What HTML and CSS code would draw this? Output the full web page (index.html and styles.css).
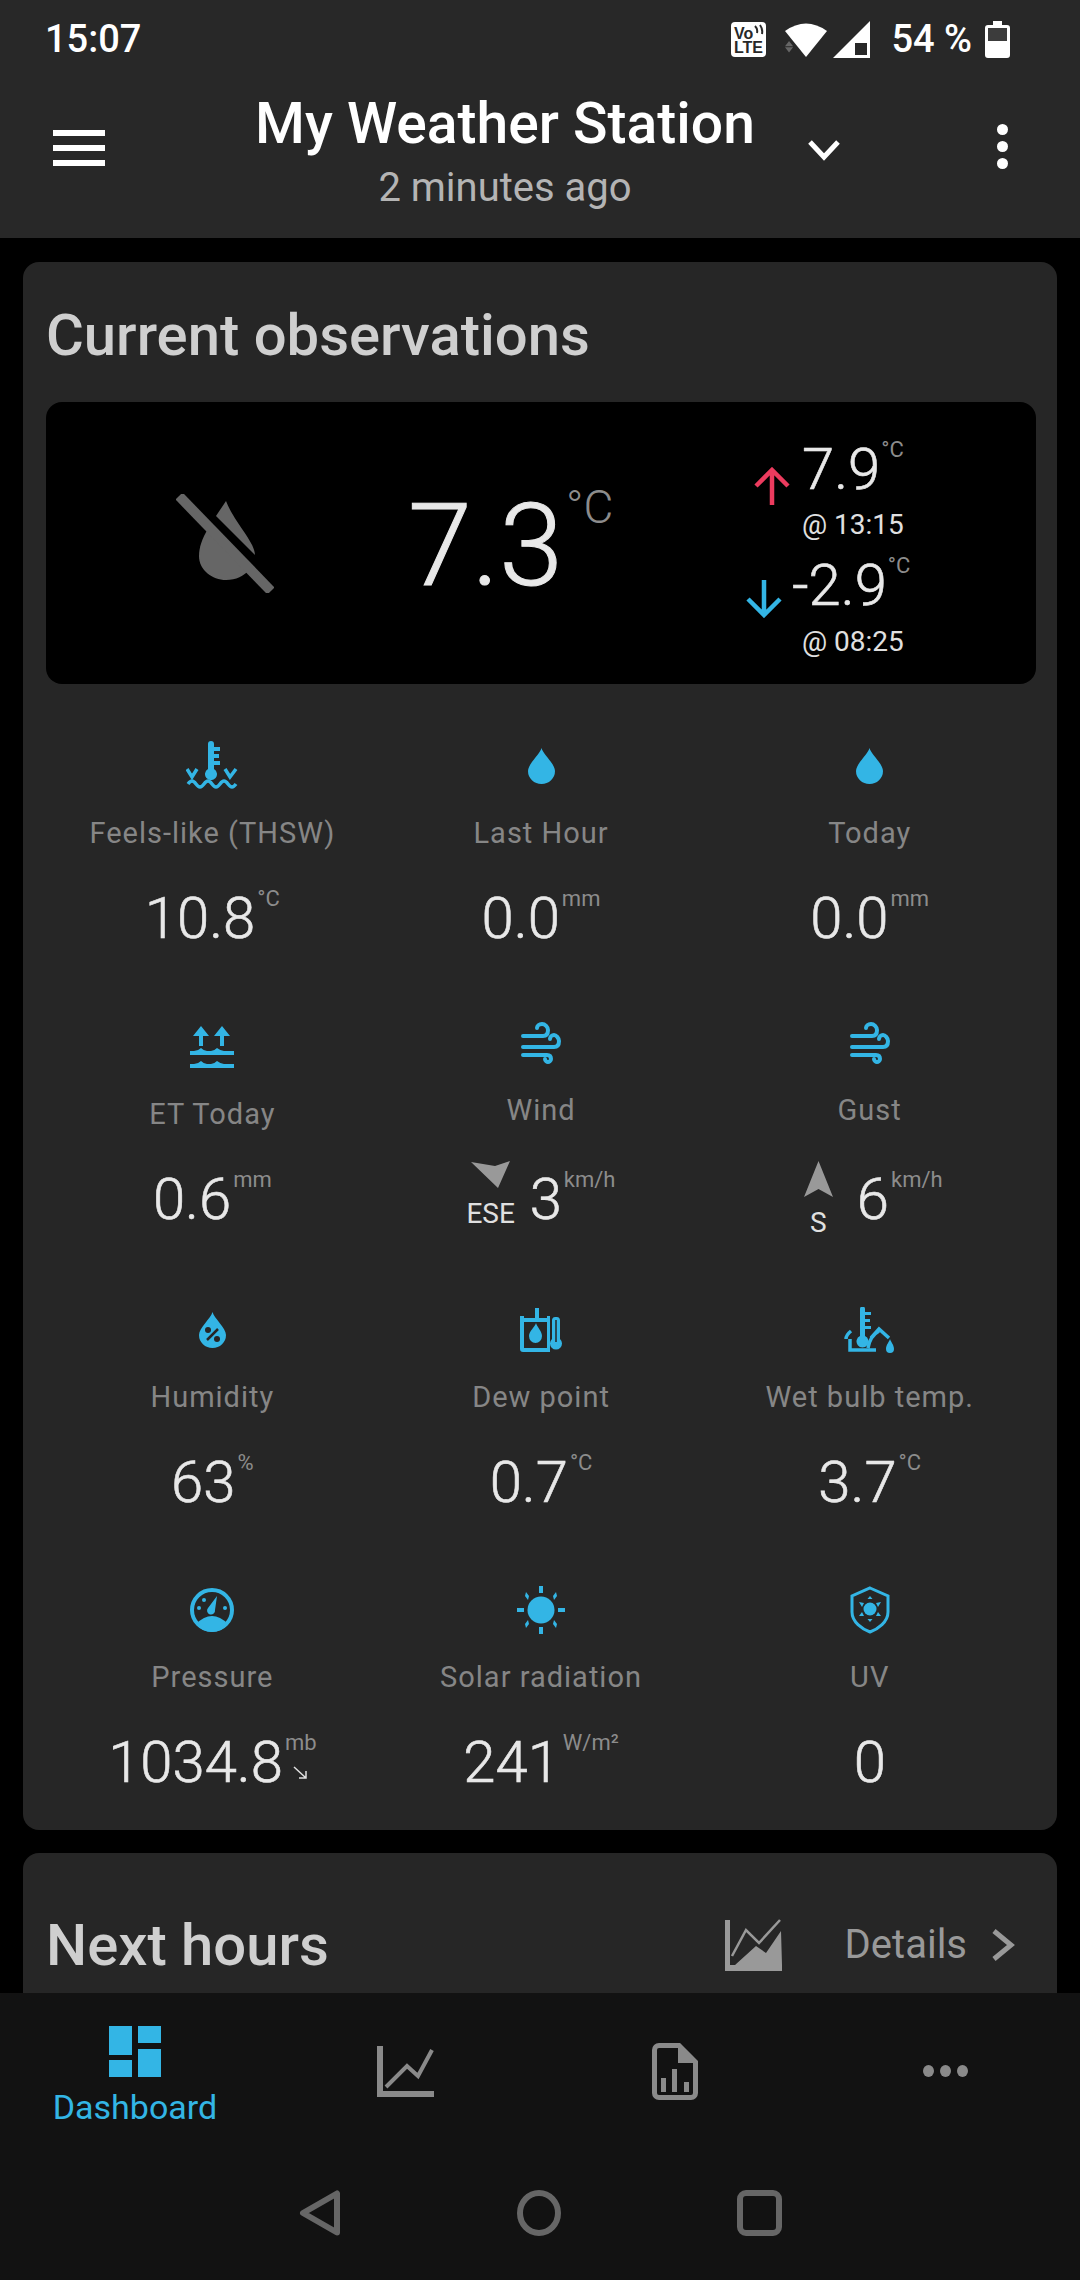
FILE: index.html
```html
<!DOCTYPE html>
<html lang="en">
<head>
<meta charset="utf-8">
<title>My Weather Station</title>
<link rel="stylesheet" href="styles.css">
</head>
<body>
<div class="app">
  <header class="top">
    <div class="status">
      <span class="clock">15:07</span>
      <div class="status-icons">
        <svg class="volte" width="35" height="35" viewBox="0 0 35 35"><rect width="35" height="35" rx="4" fill="#fff"/><text x="3" y="17" class="volte-t">Vo</text><path d="M24 4q3 3 2 7M29 3q3 4 2 9" stroke="#282828" stroke-width="2" fill="none"/><text x="3" y="31" class="volte-t">LTE</text></svg>
        <svg class="wifi" width="43" height="35" viewBox="0 0 43 35"><path d="M0 8Q21-7 42 8L21 34Z" fill="#fff"/><path d="M4.500 21l4.500 6H0zM4.500 34L0 28h9z" fill="#666" transform="translate(0 -1) scale(.9)"/></svg>
        <svg class="signal" width="38" height="37" viewBox="0 0 38 37"><path d="M0 37L37 0V37Z" fill="#fff"/><rect x="22" y="22" width="12" height="12" fill="#282828"/></svg>
        <span class="pct">54 %</span>
        <svg class="batt" width="25" height="37" viewBox="0 0 25 37"><path d="M8 0h9v4h5a3 3 0 0 1 3 3v27a3 3 0 0 1-3 3H3a3 3 0 0 1-3-3V7a3 3 0 0 1 3-3h5z" fill="#fff"/><rect x="3" y="7" width="19" height="13" fill="#3c3c3c"/></svg>
      </div>
    </div>
    <div class="toolbar">
      <div class="burger"><i></i><i></i><i></i></div>
      <div class="titles">
        <div class="title">My Weather Station</div>
        <div class="subtitle">2 minutes ago</div>
      </div>
      <svg class="chev" width="34" height="22" viewBox="0 0 34 22"><path d="M3 3l14 15L31 3" fill="none" stroke="#fff" stroke-width="5"/></svg>
      <div class="kebab"><i></i><i></i><i></i></div>
    </div>
  </header>

  <main class="scroll">
    <section class="card card-current">
      <h2 class="card-title">Current observations</h2>
      <div class="hero">
        <svg class="rain-off" width="98" height="99" viewBox="0 0 98 99"><path d="M40 22L50 7C58 28 79 48 79 61Z" fill="#666"/><path d="M32 35C26 44 23 54 23 62 23 76 36 86 50 86 60 86 68 82 73 76Z" fill="#666"/><path d="M3 2L95 97" stroke="#666" stroke-width="10"/></svg>
        <div class="hero-temp"><span class="hero-num">7.3</span><span class="hero-unit">°C</span></div>
        <div class="stats">
          <div class="stat stat-hi">
            <svg class="arrow" width="36" height="38" viewBox="0 0 36 38"><path d="M18 38V3M2 19L18 3l16 16" fill="none" stroke="#ec3b5e" stroke-width="4.500"/></svg>
            <div class="stat-num">7.9</div><div class="stat-unit">°C</div>
          </div>
          <div class="stat-time">@ 13:15</div>
          <div class="stat stat-lo">
            <svg class="arrow" width="36" height="38" viewBox="0 0 36 38"><path d="M18 0V35M2 19l16 16 16-16" fill="none" stroke="#33b5e5" stroke-width="4.500"/></svg>
            <div class="stat-num">-2.9</div><div class="stat-unit">°C</div>
          </div>
          <div class="stat-time">@ 08:25</div>
        </div>
      </div>

      <div class="metrics">
        <div class="metric">
          <div class="m-icon"><svg width="52" height="50" viewBox="0 0 52 50" class="ic"><path d="M25 0q3 0 3 3v25a6 6 0 1 1-6 0V3q0-3 3-3zM28 6h6v4h-6zM28 13h5v4h-5zM28 20h6v4h-6z" fill="#33b5e5"/><path d="M1 28l5 8 5-8M39 28l5 8 6-8M2 43c3-4 5-4 8 0s5 4 8 0 5-4 8 0 5 4 8 0 5-4 8 0 5 4 8 0" fill="none" stroke="#33b5e5" stroke-width="3.500"/></svg></div>
          <div class="m-label">Feels-like (THSW)</div>
          <div class="m-value"><span class="num">10.8</span><span class="unit">°C</span></div>
        </div>
        <div class="metric">
          <div class="m-icon"><svg width="27" height="36" viewBox="0 0 27 36" class="ic"><path d="M13.500 0C15 6 27 16 27 23A13.500 13 0 0 1 0 23C0 16 12 6 13.500 0Z"/></svg></div>
          <div class="m-label">Last Hour</div>
          <div class="m-value"><span class="num">0.0</span><span class="unit">mm</span></div>
        </div>
        <div class="metric">
          <div class="m-icon"><svg width="27" height="36" viewBox="0 0 27 36" class="ic"><path d="M13.500 0C15 6 27 16 27 23A13.500 13 0 0 1 0 23C0 16 12 6 13.500 0Z"/></svg></div>
          <div class="m-label">Today</div>
          <div class="m-value"><span class="num">0.0</span><span class="unit">mm</span></div>
        </div>

        <div class="metric">
          <div class="m-icon"><svg width="44" height="42" viewBox="0 0 44 42" class="ic"><path d="M11 0l8 10h-6v10H9V10H3zM32 0l8 10h-6v10h-4V10h-6z"/><path d="M0 25h4q4 0 7-3 3 3 6 3h4q3 0 6-3 4 3 7 3h10v4H0zM0 38h4q4 0 7-3 3 3 6 3h4q3 0 6-3 4 3 7 3h10v4H0z"/></svg></div>
          <div class="m-label">ET Today</div>
          <div class="m-value"><span class="num">0.6</span><span class="unit">mm</span></div>
        </div>
        <div class="metric metric-up">
          <div class="m-icon"><svg width="40" height="42" viewBox="0 0 40 42" class="stroke-ic"><path d="M2 14h20c4 0 5-3 5-6s-3-6-6-6-5 2-5 4M2 25h31c4 0 5-3 5-6s-3-6-5-6-4 2-4 4M2 33h24c3 0 4 2 4 4s-2 3-3 3-3-1-3-3"/></svg></div>
          <div class="m-label">Wind</div>
          <div class="m-value"><div class="dir"><svg width="40" height="27" viewBox="0 0 40 27"><path d="M0 1L24 5 39 0 27 27Z" fill="#999"/></svg><span class="dir-t">ESE</span></div><span class="num">3</span><span class="unit">km/h</span></div>
        </div>
        <div class="metric metric-up">
          <div class="m-icon"><svg width="40" height="42" viewBox="0 0 40 42" class="stroke-ic"><path d="M2 14h20c4 0 5-3 5-6s-3-6-6-6-5 2-5 4M2 25h31c4 0 5-3 5-6s-3-6-5-6-4 2-4 4M2 33h24c3 0 4 2 4 4s-2 3-3 3-3-1-3-3"/></svg></div>
          <div class="m-label">Gust</div>
          <div class="m-value"><div class="dir dir-s"><svg width="29" height="36" viewBox="0 0 29 36"><path d="M14.500 0L29 36 14.500 28 0 36Z" fill="#999"/></svg><span class="dir-t">S</span></div><span class="num">6</span><span class="unit">km/h</span></div>
        </div>

        <div class="metric">
          <div class="m-icon"><svg width="27" height="36" viewBox="0 0 27 36" class="ic"><path d="M13.500 0C15 6 27 16 27 23A13.500 13 0 0 1 0 23C0 16 12 6 13.500 0Z"/><path d="M8 28l11-11" stroke="#262626" stroke-width="2.500"/><circle cx="9" cy="18" r="3" fill="#262626"/><circle cx="18" cy="27" r="3" fill="#262626"/></svg></div>
          <div class="m-label">Humidity</div>
          <div class="m-value"><span class="num">63</span><span class="unit">%</span></div>
        </div>
        <div class="metric">
          <div class="m-icon"><svg width="43" height="44" viewBox="0 0 43 44" class="ic"><path d="M0 8h4v32h23v4H3q-3 0-3-3zM15 0h4v10h11V8h0v36h-3V14H4v-4h11zM36 9a3.500 3.500 0 0 1 4 3v19a6 6 0 1 1-8 0V12a3.500 3.500 0 0 1 4-3z"/><path d="M30 8h-3v36h3z"/><path d="M36 12v22" stroke="#262626" stroke-width="1.500"/><path d="M16 15c1 4 6 8 6 13a6.500 7 0 0 1-13 0c0-5 6-9 7-13z"/></svg></div>
          <div class="m-label">Dew point</div>
          <div class="m-value"><span class="num">0.7</span><span class="unit">°C</span></div>
        </div>
        <div class="metric">
          <div class="m-icon"><svg width="52" height="47" viewBox="0 0 52 47" class="ic"><path d="M16 2a2.500 2.500 0 0 1 5 0v27a6 6 0 1 1-5 0zM21 5h6v3h-6zM21 12h5v3h-5zM21 19h6v3h-6z"/><path d="M6 32v11h26M2 32q0-4 5-8M24 41q2-12 11-17M27 31l8-9 10 9" fill="none" stroke="#33b5e5" stroke-width="3.500"/><path d="M46 32c1 3 4 6 4 10a4 4 0 0 1-8 0c0-4 3-7 4-10z"/></svg></div>
          <div class="m-label">Wet bulb temp.</div>
          <div class="m-value"><span class="num">3.7</span><span class="unit">°C</span></div>
        </div>

        <div class="metric">
          <div class="m-icon"><svg width="44" height="44" viewBox="0 0 44 44" class="ic"><circle cx="22" cy="22" r="20" fill="none" stroke="#33b5e5" stroke-width="4"/><path d="M6 36Q22 20 38 36A20 20 0 0 1 6 36Z"/><path d="M27 8l-2 14a4 4 0 1 1-7-2z"/><circle cx="14" cy="12" r="2"/><circle cx="9" cy="20" r="2"/><circle cx="35" cy="20" r="2"/></svg></div>
          <div class="m-label">Pressure</div>
          <div class="m-value"><span class="num">1034.8</span><span class="unit unit-stack">mb<svg width="15" height="14" viewBox="0 0 15 14" class="trend"><path d="M1 1l12 11M13 5v7H6" fill="none" stroke="#e0e0e0" stroke-width="1.500"/></svg></span></div>
        </div>
        <div class="metric">
          <div class="m-icon"><svg width="48" height="48" viewBox="0 0 48 48" class="ic"><circle cx="24" cy="24" r="13.500"/><rect x="22" y="0" width="4" height="7"/><rect x="22" y="41" width="4" height="7"/><rect x="0" y="22" width="7" height="4"/><rect x="41" y="22" width="7" height="4"/><path d="M9 6l3 4-1 4-3-4zM39 6l1 4-3 4-1-4zM8 38l3-4 1 4-3 4zM40 38l-1 4-3-4 1-4z"/></svg></div>
          <div class="m-label">Solar radiation</div>
          <div class="m-value"><span class="num">241</span><span class="unit unit-wide">W/m²</span></div>
        </div>
        <div class="metric">
          <div class="m-icon"><svg width="40" height="48" viewBox="0 0 40 48" class="ic"><path d="M20 2L38 10V26C38 36 28 43 20 46 12 43 2 36 2 26V10Z" fill="none" stroke="#33b5e5" stroke-width="3"/><circle cx="20" cy="23" r="6.500"/><path d="M20 10l2.500 3h-5zM20 36l-2.500-3h5zM9 16l5 1-2 4zM31 16l-3 5-2-4zM9 30l3-4 2 4zM31 30l-5 0 2-4z"/></svg></div>
          <div class="m-label">UV</div>
          <div class="m-value"><span class="num">0</span></div>
        </div>
      </div>
    </section>

    <section class="card card-next">
      <h2 class="card-title">Next hours</h2>
      <div class="card-actions">
        <svg width="57" height="52" viewBox="0 0 57 52"><path d="M0 1h5v45h52v6H0z" fill="#999"/><path d="M7 37L21 11 34 24 55 1" fill="none" stroke="#999" stroke-width="2.500"/><path d="M10 46L31 27 41 34 56 12 57 46z" fill="#999"/></svg>
        <span class="details">Details</span>
        <svg width="24" height="32" viewBox="0 0 24 32"><path d="M3 2l17 14L3 30" fill="none" stroke="#999" stroke-width="5"/></svg>
      </div>
    </section>
  </main>

  <footer class="bottom">
    <nav class="tabs">
      <div class="tab tab-active">
        <svg width="52" height="51" viewBox="0 0 52 51" fill="#33b5e5"><rect width="23" height="29"/><rect y="34" width="23" height="17"/><rect x="29" width="23" height="17"/><rect x="29" y="23" width="23" height="28"/></svg>
        <span class="tab-label">Dashboard</span>
      </div>
      <div class="tab tab-chart">
        <svg width="57" height="51" viewBox="0 0 57 51"><path d="M0 0h6v45h51v6H0z" fill="#8a8a8a"/><path d="M9 41L30 20 41 30 55 4" fill="none" stroke="#8a8a8a" stroke-width="4"/></svg>
      </div>
      <div class="tab tab-file">
        <svg width="46" height="57" viewBox="0 0 46 57"><path d="M7 2.500H27L43.500 19V50a4.500 4.500 0 0 1-4.500 4.500H7A4.500 4.500 0 0 1 2.500 50V7A4.500 4.500 0 0 1 7 2.500Z" fill="none" stroke="#8a8a8a" stroke-width="5"/><path d="M26 2L44 20H26Z" fill="#8a8a8a"/><path d="M9 35h5v14H9zM20 26h5v23h-5zM32 39h5v10h-5z" fill="#8a8a8a"/></svg>
      </div>
      <div class="tab tab-more"><i></i><i></i><i></i></div>
    </nav>
    <div class="sysnav">
      <svg width="42" height="46" viewBox="0 0 42 46"><path d="M38 3.500V42.500L4 23Z" fill="none" stroke="#666" stroke-width="6" stroke-linejoin="round"/></svg>
      <svg width="44" height="46" viewBox="0 0 44 46"><ellipse cx="22" cy="23" rx="19" ry="20" fill="none" stroke="#666" stroke-width="6"/></svg>
      <svg width="45" height="46" viewBox="0 0 45 46"><rect x="3" y="3" width="39" height="40" rx="6" fill="none" stroke="#666" stroke-width="6"/></svg>
    </div>
  </footer>
</div>
</body>
</html>
```

FILE: styles.css
```css
* { box-sizing: border-box; }
html, body { margin: 0; padding: 0; background: #000; }
body { font-family: Roboto, "Noto Sans", sans-serif; color: #fff; }
.app { width: 1080px; height: 2280px; display: flex; flex-direction: column; overflow: hidden; }

.top { height: 238px; background: #282828; flex: none; }
.status { height: 78px; display: flex; justify-content: space-between; padding: 21px 70px 0 45px; }
.clock { font-size: 38px; font-weight: 500; line-height: 36px; }
.status-icons { display: flex; align-items: flex-start; }
.volte { margin-top: 1px; }
.volte-t { font: 700 16px "Liberation Sans", sans-serif; fill: #282828; }
.wifi { margin: 2px 0 0 19px; }
.signal { margin: 0 0 0 5px; }
.pct { font-size: 38px; font-weight: 500; line-height: 36px; margin: 0 13px 0 20px; }

.toolbar { display: flex; align-items: flex-start; padding-left: 53px; }
.burger { width: 52px; margin-top: 52px; display: flex; flex-direction: column; gap: 9px; }
.burger i { display: block; height: 6px; background: #fff; }
.titles { width: 600px; margin-left: 100px; text-align: center; }
.title { font-size: 57px; font-weight: 500; line-height: 64px; margin-top: 14px; }
.subtitle { font-size: 40px; line-height: 48px; color: #b4b4b4; margin-top: 8px; }
.chev { margin: 61px 0 0 2px; }
.kebab { margin: 46px 0 0 156px; display: flex; flex-direction: column; gap: 6px; }
.kebab i { display: block; width: 11px; height: 11px; border-radius: 50%; background: #fff; }

.scroll { flex: 1; min-height: 0; overflow: hidden; padding: 24px 23px 0; background: #000; }
.card { background: #262626; border-radius: 16px; }
.card-current { height: 1568px; padding: 0 21px 0 23px; }
.card-title { margin: 0; font-size: 58px; font-weight: 500; line-height: 64px; color: #cfcfcf; }
.card-current .card-title { padding: 41px 0 0; height: 140px; }

.hero { height: 282px; background: #000; border-radius: 16px; display: flex; align-items: flex-start; }
.rain-off { margin: 92px 0 0 130px; flex: none; }
.hero-temp { display: flex; align-items: flex-start; margin: 78px 0 0 134px; width: 338px; flex: none; }
.hero-num { font-size: 115px; font-weight: 300; -webkit-text-stroke: 1px #e8e8e8; line-height: 132px; color: #e8e8e8; }
.hero-unit { font-size: 46px; font-weight: 300; line-height: 52px; color: #8c8c8c; margin: 1px 0 0 3px; }
.stats { padding-top: 39px; }
.stat { display: flex; align-items: flex-start; height: 56px; }
.stat-num { font-size: 58px; font-weight: 300; -webkit-text-stroke: .6px #e8e8e8; line-height: 56px; color: #e8e8e8; margin-left: 12px; }
.stat-hi .arrow { margin: 26px 0 0 8px; }
.stat-lo { margin-top: 15px; }
.stat-lo .arrow { margin: 23px 0 0 0; }
.stat-lo .stat-num { margin-left: 10px; }
.stat-unit { font-size: 22px; font-weight: 400; line-height: 26px; color: #8c8c8c; margin: -4px 0 0 1px; }
.stat-time { font-size: 28px; line-height: 34px; color: #e0e0e0; margin: 11px 0 0 56px; height: 34px; }
.stat-lo + .stat-time { margin-top: 12px; }

.metrics { display: grid; grid-template-columns: repeat(3, 328.700px); grid-template-rows: 281px 283px 280px 280px; margin: 50px 0 0 2px; }
.metric { display: flex; flex-direction: column; align-items: center; }
.m-icon { height: 64px; display: flex; align-items: center; justify-content: center; }
.ic { fill: #33b5e5; }
.stroke-ic { fill: none; stroke: #33b5e5; stroke-width: 4; stroke-linecap: round; }
.m-label { font-size: 29px; line-height: 40px; letter-spacing: 1px; color: #868686; margin-top: 15px; }
.m-value { display: flex; justify-content: center; align-items: flex-start; margin-top: 33px; height: 64px; }
.metric-up .m-icon { margin-top: -4px; }
.metric-up .m-value { margin-top: 37px; }
.num { font-size: 58px; font-weight: 300; -webkit-text-stroke: .6px #e8e8e8; line-height: 64px; color: #e8e8e8; }
.unit { font-size: 22px; font-weight: 400; line-height: 26px; color: #8c8c8c; margin-left: 2px; }
.unit-wide { margin-left: 3px; }
.unit-stack { display: flex; flex-direction: column; align-items: center; }
.trend { margin-top: 10px; }
.dir { display: flex; flex-direction: column; align-items: center; margin: -6px 15px 0 0; width: 48px; }
.dir-s { margin: -6px 24px 0 7px; width: 29px; }
.dir-t { font-size: 28px; line-height: 34px; color: #e0e0e0; margin-top: 9px; }

.card-next { margin-top: 23px; height: 300px; padding: 60px 22px 0 23px; display: flex; align-items: flex-start; justify-content: space-between; }
.card-actions { display: flex; align-items: center; color: #999; margin: 6px 20px 0 0; }
.details { font-size: 40px; line-height: 52px; margin: 0 24px 0 63px; }

.bottom { height: 287px; background: #121212; flex: none; }
.tabs { display: grid; grid-template-columns: repeat(4, 270px); height: 167px; }
.tab { display: flex; flex-direction: column; align-items: center; padding-top: 33px; }
.tab-label { font-size: 34px; line-height: 40px; color: #33b5e5; margin-top: 10px; }
.tab-chart { padding-top: 53px; }
.tab-file { padding-top: 50px; }
.tab-more { flex-direction: row; justify-content: center; align-items: flex-start; gap: 6px; padding-top: 72px; }
.tab-more i { display: block; width: 11px; height: 12px; border-radius: 50%; background: #8a8a8a; }
.sysnav { display: flex; justify-content: center; align-items: center; gap: 176px; padding-top: 30px; }
```
